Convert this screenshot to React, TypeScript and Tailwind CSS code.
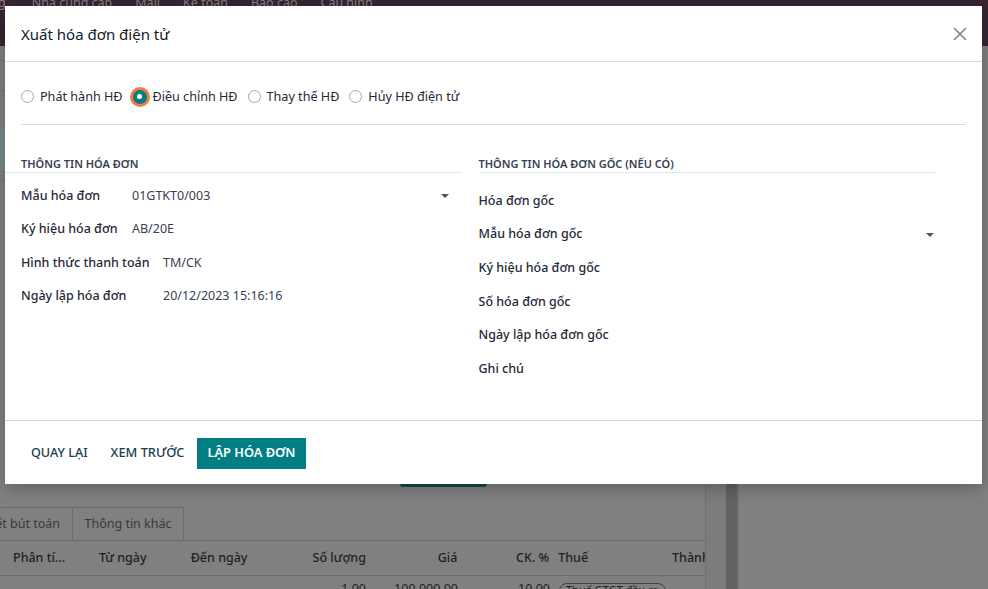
const font = { fontFamily: '"Noto Sans", "Open Sans", sans-serif' }

function Radio({ label, checked }: { label: string; checked?: boolean }) {
    return (
        <label className="flex items-center gap-[6px] text-[12.6px] text-[#1f2937]">
            {checked ? (
                <span className="w-[14px] h-[14px] rounded-full bg-[#017e84] ring-[3px] ring-[#f47b3f] flex items-center justify-center">
                    <span className="w-[5px] h-[5px] rounded-full bg-white"></span>
                </span>
            ) : (
                <span className="w-[13px] h-[13px] rounded-full border border-[#a3a7ad] bg-white"></span>
            )}
            <span>{label}</span>
        </label>
    )
}

function Caret() {
    return <span className="w-0 h-0 border-l-[4px] border-r-[4px] border-t-[4px] border-l-transparent border-r-transparent border-t-[#4b5563]"></span>
}

export default function App() {
    return (
        <div className="relative w-full h-[589px] overflow-hidden bg-[#808080]" style={font}>
            {/* Dimmed page behind */}
            <div className="h-[46px] bg-[#382533] flex items-end pb-[37px] gap-[23px] text-[12.5px] text-[#8a7f86] leading-none">
                <span className="-ml-[2px]">g</span>
                <span className="ml-[3px]">Nhà cung cấp</span>
                <span>Mall</span>
                <span>Kế toán</span>
                <span>Báo cáo</span>
                <span>Cấu hình</span>
            </div>
            <div className="flex h-[560px]">
                <div className="w-[706px] flex flex-col border-r border-[#707070]">
                    <div className="h-[15px] border-b border-[#747474]"></div>
                    <div className="h-[30px] border-b border-[#747474]"></div>
                    <div className="h-[34px]"></div>
                    <div className="h-[45px] w-[6px] bg-[#76898a]"></div>
                    <div className="h-[11px] border-b border-[#747474]"></div>
                    <div className="h-[291px]"></div>
                    <div className="ml-[400px] w-[87px] h-[15px] rounded-[3px] bg-[#0d4b4e]"></div>
                    <div className="h-[20px]"></div>
                    <div className="flex h-[34px] border-b border-[#6b6b6b] text-[12.5px] text-[#3a3a3a]">
                        <div className="w-[73px] border-r border-t border-[#6b6b6b] flex items-center justify-end pr-[12px] overflow-hidden whitespace-nowrap">
                            ết bút toán
                        </div>
                        <div className="w-[111px] border-r border-t border-[#6b6b6b] flex items-center justify-center">
                            Thông tin khác
                        </div>
                    </div>
                    <div className="flex items-center h-[35px] border-b border-[#6b6b6b] text-[12.5px] font-medium text-[#1f1f1f] whitespace-nowrap">
                        <span className="w-[99px] pl-[13px]">Phân tí...</span>
                        <span className="w-[92px]">Từ ngày</span>
                        <span className="w-[122px]">Đến ngày</span>
                        <span className="w-[80px]">Số lượng</span>
                        <span className="w-[65px] text-right">Giá</span>
                        <span className="w-[92px] text-right">CK. %</span>
                        <span className="w-[123px] pl-[9px]">Thuế</span>
                        <span className="overflow-hidden w-[33px]">Thành</span>
                    </div>
                    <div className="flex items-start h-[20px] text-[12.5px] text-[#1f1f1f] whitespace-nowrap pt-[7px] leading-none">
                        <span className="w-[366px] text-right">1,00</span>
                        <span className="w-[92px] text-right">100.000,00</span>
                        <span className="w-[92px] text-right">10,00</span>
                        <span className="ml-[9px] px-[6px] h-[16px] rounded-full border border-[#444] text-[11px]">Thuế GTGT đầu ra</span>
                    </div>
                </div>
                <div className="w-[20px] bg-[#7c7c7c]"></div>
                <div className="w-[11px] bg-[#626262]"></div>
                <div className="flex-1 border-l-[2px] border-[#737373]"></div>
            </div>

            {/* Modal */}
            <div className="absolute left-[5px] top-[6px] w-[977px] h-[478px] bg-white shadow-[0_4px_16px_rgba(0,0,0,0.25)] flex flex-col">
                <div className="h-[56px] flex items-center justify-between px-[16px] border-b border-[#d8dadd]">
                    <h1 className="text-[15px] text-[#111827] pt-[1px]">Xuất hóa đơn điện tử</h1>
                    <svg width="14" height="14" viewBox="0 0 14 14" className="mr-[-1px] mt-[1px]">
                        <path d="M1 1 L13 13 M13 1 L1 13" stroke="#7a7f86" strokeWidth="1.5" fill="none" />
                    </svg>
                </div>

                <div className="flex-1 flex flex-col">
                    <div className="px-[16px]">
                        <div className="h-[63px] flex items-center gap-[10px] border-b border-[#d8dadd] pt-[8px]">
                            <Radio label="Phát hành HĐ" />
                            <Radio label="Điều chỉnh HĐ" checked />
                            <Radio label="Thay thế HĐ" />
                            <Radio label="Hủy HĐ điện tử" />
                        </div>
                    </div>

                    <div className="grid grid-cols-2 gap-[17px] pr-[47px] pt-[32px]">
                        <div>
                            <h2 className="pl-[16px] pb-[1px] text-[11px] leading-[14px] font-semibold uppercase text-[#374151] border-b border-[#e3e5e8]">
                                Thông tin hóa đơn
                            </h2>
                            <div className="pl-[16px] pr-[13px] text-[12.5px] pt-[6px]">
                                <div className="h-[34px] flex items-center">
                                    <span className="w-[111px] font-medium text-[#1f2937]">Mẫu hóa đơn</span>
                                    <span className="flex-1 text-[#374151]">01GTKT0/003</span>
                                    <Caret />
                                </div>
                                <div className="h-[33px] flex items-center">
                                    <span className="w-[111px] font-medium text-[#1f2937]">Ký hiệu hóa đơn</span>
                                    <span className="text-[#374151]">AB/20E</span>
                                </div>
                                <div className="h-[34px] flex items-center">
                                    <span className="w-[142px] font-medium text-[#1f2937]">Hình thức thanh toán</span>
                                    <span className="text-[#374151]">TM/CK</span>
                                </div>
                                <div className="h-[33px] flex items-center">
                                    <span className="w-[142px] font-medium text-[#1f2937]">Ngày lập hóa đơn</span>
                                    <span className="text-[#374151]">20/12/2023 15:16:16</span>
                                </div>
                            </div>
                        </div>
                        <div>
                            <h2 className="pb-[1px] text-[11px] leading-[14px] font-semibold uppercase text-[#374151] border-b border-[#e3e5e8]">
                                Thông tin hóa đơn gốc (nếu có)
                            </h2>
                            <div className="text-[12.5px] font-medium text-[#1f2937] pt-[11px] pr-[1px]">
                                <div className="h-[34px] flex items-center">Hóa đơn gốc</div>
                                <div className="h-[33px] flex items-center justify-between">
                                    <span>Mẫu hóa đơn gốc</span>
                                    <Caret />
                                </div>
                                <div className="h-[34px] flex items-center">Ký hiệu hóa đơn gốc</div>
                                <div className="h-[34px] flex items-center">Số hóa đơn gốc</div>
                                <div className="h-[33px] flex items-center">Ngày lập hóa đơn gốc</div>
                                <div className="h-[34px] flex items-center">Ghi chú</div>
                            </div>
                        </div>
                    </div>
                </div>

                <div className="h-[64px] border-t border-[#d0d3d8] flex items-center gap-[3px] px-[16px] pt-[1px]">
                    <button className="h-[31px] px-[10px] text-[12.6px] font-medium text-[#1b3c4b]">QUAY LẠI</button>
                    <button className="h-[31px] px-[10px] text-[12.8px] font-medium text-[#1b3c4b]">XEM TRƯỚC</button>
                    <button className="h-[31px] px-[10px] text-[12.8px] font-semibold text-white bg-[#017e84]">LẬP HÓA ĐƠN</button>
                </div>
            </div>
        </div>
    )
}
